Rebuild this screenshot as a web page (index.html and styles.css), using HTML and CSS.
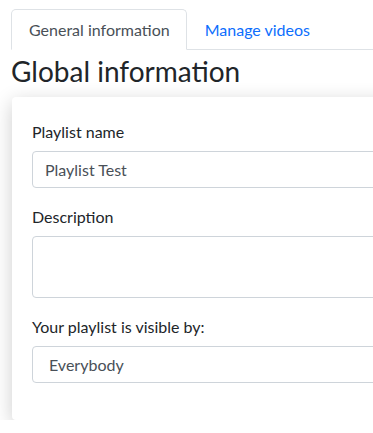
FILE: index.html
```html
<!DOCTYPE html>
<html lang="en">
<head>
  <meta charset="UTF-8" />
  <meta name="viewport" content="width=device-width, initial-scale=1.0" />
  <title>Playlist - Edit</title>
  <link rel="stylesheet" href="styles.css">
</head>
<body>
  <ul class="tabs">
    <li class="tab active"><a href="#">General information</a></li>
    <li class="tab"><a href="#">Manage videos</a></li>
  </ul>

  <h2 class="title">Global information</h2>

  <div class="card">
    <div class="field">
      <label for="name">Playlist name</label>
      <input id="name" type="text" value="Playlist Test">
    </div>
    <div class="field">
      <label for="desc">Description</label>
      <textarea id="desc"></textarea>
    </div>
    <div class="field">
      <label for="privacy">Your playlist is visible by:</label>
      <div class="select">Everybody</div>
    </div>
  </div>
</body>
</html>
```

FILE: styles.css
```css
body {
  font-family: 'Lato', 'Open Sans', sans-serif;
  margin: 0;
  padding: 9px 0 0 11px;
  background-color: white;
  color: #212529;
  overflow: hidden;
}
.tabs {
  display: flex;
  list-style: none;
  margin: 0;
  padding: 0;
  border-bottom: 1px solid #dee2e6;
}
.tab a {
  display: block;
  padding: 10px 16px 10px 17px;
  font-size: 16px;
  line-height: 19px;
  text-decoration: none;
  color: #0d6efd;
  border: 1px solid transparent;
  border-radius: 5px 5px 0 0;
  margin-bottom: -1px;
}
.tab.active a {
  color: #495057;
  border-color: #dee2e6 #dee2e6 white;
  background-color: white;
}
.title {
  font-size: 28px;
  font-weight: 400;
  margin: 3px 0 8px;
  line-height: 36px;
}
.card {
  width: 420px;
  margin-left: 1px;
  background-color: white;
  border-radius: 4px;
  box-shadow: 0 5px 20px rgba(0,0,0,0.2);
  padding: 24px 20px 37px;
}
.field {
  margin-bottom: 18px;
}
.field:last-child {
  margin-bottom: 0;
}
.field label {
  display: block;
  font-size: 16px;
  line-height: 22px;
  margin-bottom: 8px;
}
.field input,
.field textarea,
.select {
  display: block;
  box-sizing: border-box;
  width: 100%;
  border: 1px solid #ced4da;
  border-radius: 4px;
  font-family: inherit;
  font-size: 16px;
  color: #495057;
  background-color: white;
}
.field input {
  height: 37px;
  padding: 0 12px;
}
.field textarea {
  height: 62px;
  resize: none;
}
.select {
  height: 37px;
  line-height: 35px;
  padding: 0 16px;
}
```
